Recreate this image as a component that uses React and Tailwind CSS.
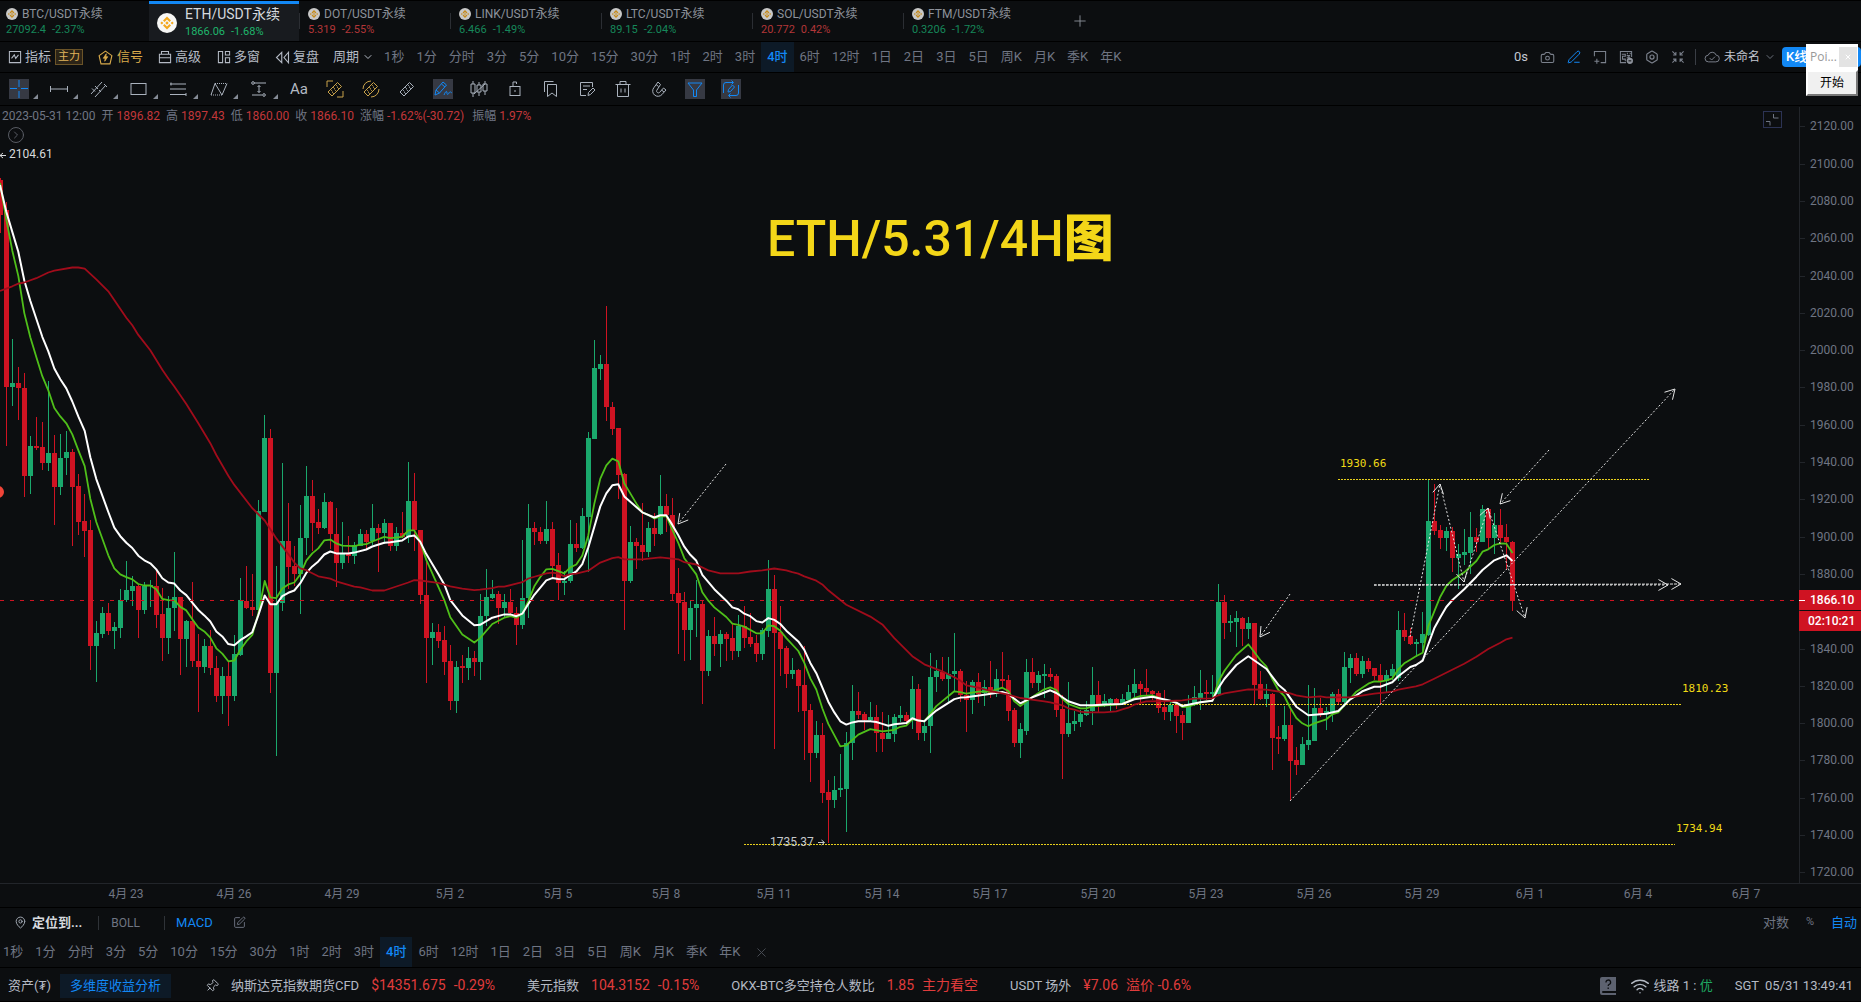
import {
  Camera,
  ChevronDown,
  CircleChevronRight,
  Hexagon,
  MapPin,
  PenLine,
  Pin,
  Plus,
  SquarePen,
  Wifi,
  X,
} from "lucide-react"

const tabs = [
  { name: "BTC/USDT永续", price: "27092.4", change: "-2.37%", up: true },
  { name: "ETH/USDT永续", price: "1866.06", change: "-1.68%", up: true, active: true },
  { name: "DOT/USDT永续", price: "5.319", change: "-2.55%" },
  { name: "LINK/USDT永续", price: "6.466", change: "-1.49%", up: true },
  { name: "LTC/USDT永续", price: "89.15", change: "-2.04%", up: true },
  { name: "SOL/USDT永续", price: "20.772", change: "0.42%" },
  { name: "FTM/USDT永续", price: "0.3206", change: "-1.72%", up: true },
]

const periods = [
  "1秒", "1分", "分时", "3分", "5分", "10分", "15分", "30分", "1时", "2时", "3时",
  "4时", "6时", "12时", "1日", "2日", "3日", "5日", "周K", "月K", "季K", "年K",
]

const dates = [
  "4月 23", "4月 26", "4月 29", "5月 2", "5月 5", "5月 8", "5月 11", "5月 14",
  "5月 17", "5月 20", "5月 23", "5月 26", "5月 29", "6月 1", "6月 4", "6月 7",
]

// one block per stretch of the chart, rows are [up, bodyTop, bodyBottom, high, low]
const candleBlocks = [
  {
    first: 0, base: 160, step: 2.6133,
    rows: [
      [0,52,143,48,190],[0,130,592,110,747],[1,583,592,467,643],[0,583,597,542,680],[0,597,825,557,881],
      [1,747,825,721,874],[0,747,752,672,759],[0,751,793,685,809],[1,766,793,578,812],[0,766,854,719,955],
      [1,779,854,716,875],[1,763,780,707,823],[0,763,854,755,1008],[0,852,945,821,980],[0,943,969,872,1038],
      [0,967,1269,942,1334],[1,1236,1269,1205,1363],[1,1184,1238,1168,1249],[0,1184,1230,1157,1241],[1,1220,1230,1208,1279],
      [1,1151,1222,1121,1250],[1,1124,1151,1049,1155],[1,1114,1126,1087,1166],[0,1114,1175,1109,1250],[1,1114,1175,1102,1186],
      [1,1110,1114,1097,1168],[0,1112,1188,1070,1222],[0,1187,1248,1119,1308],[1,1171,1248,1139,1291],[1,1142,1172,1024,1231],
      [0,1142,1253,1141,1346],[1,1205,1253,1203,1326],[0,1206,1308,1103,1324],[0,1308,1324,1240,1442],[1,1270,1324,1252,1341],
      [0,1270,1328,1227,1345],[0,1328,1402,1296,1416],[1,1348,1402,1326,1449],[0,1348,1402,1311,1480],[1,1291,1402,1242,1414],
      [1,1151,1294,1092,1296],[0,1152,1170,1062,1173],[0,1168,1175,1083,1191],[1,917,1175,889,1178],[1,727,919,667,921],
      [0,727,1340,702,1392],[1,1157,1340,1061,1557],[1,996,1157,792,1179],[0,996,1063,896,1120],[0,1061,1081,1009,1112],
      [1,989,1081,901,1186],[1,878,989,800,1032],[0,878,949,837,1022],[0,946,962,912,977],[1,894,962,869,965],
      [0,894,978,892,1017],[0,977,1052,910,1115],[1,1030,1052,946,1070],[0,1028,1034,983,1052],[1,1007,1034,997,1055],
      [1,978,1008,965,1010],[0,978,997,968,1018],[1,962,996,899,1005],[0,962,974,951,1076],[1,949,974,939,1004],
      [0,949,1008,949,1022],[1,976,1008,960,1022],[0,975,985,920,988],[1,891,985,788,1000],[0,891,968,817,1021],
      [0,968,1138,967,1159],[0,1138,1248,1050,1368],[1,1233,1248,1210,1321],[0,1233,1256,1213,1276],[0,1254,1311,1219,1345],
      [0,1310,1413,1267,1437],[1,1326,1413,1310,1445],[0,1322,1328,1293,1366],[1,1301,1328,1273,1358],[0,1301,1311,1282,1349],
    ],
  },
  {
    first: 80, base: 280, step: 2.7034,
    rows: [
      [1,907,1032,850,1081],[1,857,907,780,935],[1,850,859,811,862],[0,850,888,842,931],[1,871,888,848,910],
      [0,871,901,835,910],[0,900,934,884,987],[1,860,934,703,944],[1,671,861,606,913],[0,671,680,653,717],
      [0,680,705,669,715],[1,674,705,598,714],[0,674,772,655,805],[0,770,818,738,866],[1,814,818,786,851],
      [1,715,815,648,818],[0,715,724,656,735],[1,639,724,616,728],[1,428,640,411,789],[1,239,429,163,431],
      [1,228,240,204,270],[0,228,342,70,380],[0,342,402,331,419],[0,401,526,400,591],[0,525,815,522,945],
      [1,709,815,665,818],[0,709,718,697,781],[0,717,734,603,761],[1,671,734,653,748],[0,671,688,630,718],
      [1,612,688,527,689],[0,612,634,578,682],[0,634,848,588,866],[0,847,872,778,1011],[0,871,945,843,1030],
      [1,888,945,867,1027],[1,877,888,810,965],[0,877,1056,865,1146],[1,963,1056,945,1071],[0,963,983,910,1017],
      [1,958,983,947,1046],[0,958,970,951,1031],[0,969,1002,930,1027],[1,935,1002,906,1019],[0,935,967,880,995],
      [0,966,983,901,992],[0,982,1010,960,1034],[1,947,1010,941,1027],[1,836,948,758,966],[0,836,953,797,1269],
      [0,952,997,882,1071],[0,996,1064,989,1103],[1,1053,1064,1022,1079],[0,1053,1097,1051,1168],[0,1096,1164,989,1298],
      [0,1163,1280,1147,1356],[1,1231,1280,1193,1291],[0,1231,1386,1197,1413],[0,1385,1407,1352,1522],[1,1380,1407,1340,1427],
      [1,1374,1380,1282,1398],[1,1253,1375,1222,1492],[1,1166,1253,1096,1298],[0,1166,1175,1115,1186],[0,1174,1189,1167,1217],
      [1,1182,1190,1142,1195],[0,1182,1224,1149,1277],[0,1224,1240,1168,1277],[1,1225,1240,1175,1242],[1,1182,1226,1173,1250],
      [1,1177,1183,1152,1195],[0,1177,1192,1168,1205],[1,1107,1190,1070,1214],[0,1107,1224,1091,1243],[1,1207,1224,1190,1245],
      [1,1072,1207,1008,1279],[1,1058,1072,1027,1115],[0,1059,1080,1020,1083],[1,1064,1080,1020,1140],[1,1058,1064,955,1110],
    ],
  },
  {
    first: 160, base: 560, step: 3,
    rows: [
      [0,333,405,326,425],[0,404,419,363,516],[1,366,419,360,461],[0,366,402,338,430],[1,381,400,360,439],
      [0,381,402,303,413],[1,357,402,327,411],[0,357,363,276,382],[0,360,452,345,482],[0,450,548,444,561],
      [1,507,548,489,594],[1,336,513,297,525],[0,336,369,293,384],[1,345,369,333,393],[1,342,347,311,414],
      [0,342,351,324,363],[0,348,450,341,470],[0,447,522,405,657],[1,489,522,366,530],[1,483,492,453,513],
      [1,462,486,450,500],[1,450,465,423,467],[1,405,453,320,496],[0,405,432,363,455],[1,423,432,402,441],
      [1,417,430,414,452],[0,417,432,413,447],[1,417,432,402,436],[1,396,420,375,422],[1,372,399,326,415],
      [0,372,387,363,430],[0,384,396,326,404],[0,394,402,390,420],[0,399,444,394,460],[0,441,456,390,480],
      [1,435,456,425,482],[0,435,468,425,519],[0,465,489,453,540],[1,435,489,405,489],[1,411,435,377,437],
      [1,399,414,330,450],[0,396,402,360,420],[1,396,402,345,420],[1,126,402,72,405],[0,126,189,105,237],
      [1,183,189,165,216],[1,174,186,153,262],[0,174,207,170,258],[1,189,207,171,237],[0,189,375,189,435],
      [0,372,417,333,420],[1,402,417,372,441],[0,402,534,400,629],[0,531,537,499,582],[1,495,537,437,543],
      [0,495,603,440,723],[0,600,615,561,644],[1,552,615,530,615],[1,540,555,375,569],[1,444,543,384,543],
      [0,444,462,413,470],[1,453,462,441,511],[1,402,456,396,485],[0,402,426,387,435],[1,321,426,276,440],
      [1,294,324,282,370],[0,294,342,278,348],[1,303,342,288,354],[0,303,327,293,336],[0,324,347,323,360],
      [0,345,366,311,431],[1,345,363,329,400],[1,327,348,311,360],[1,210,354,153,363],[0,210,231,159,243],
      [0,228,252,204,255],[1,246,252,238,290],
    ],
  },
  {
    first: 237, base: 370, step: 3,
    rows: [
      [1,792,819,727,849],[1,453,795,330,798],[0,453,483,341,496],[0,480,504,465,537],[1,483,504,470,543],
      [0,483,563,471,606],[1,552,563,522,657],[1,546,555,477,585],[1,501,548,426,611],[0,501,516,474,546],
      [1,417,516,404,516],[0,417,504,413,537],[1,465,504,429,553],[0,465,503,416,522],[0,501,517,462,600],
      [0,516,692,513,723],
    ],
  },
]

const averageBlocks = [
  {
    x: 0, y: 160, sx: 3, sy: 2.6133,
    white: "0,65 19,135 37,188 55,240 73,315 91,368 109,415 127,462 145,500 163,545 181,573 199,597 217,631 235,670 254,708 271,777 289,834 325,920 343,961 361,983 379,1000 397,1014 415,1034 433,1046 451,1054 469,1070 487,1093 505,1104 523,1107 541,1125 559,1137 577,1157 595,1176 613,1190 631,1206 649,1232 667,1245 685,1265 703,1268 721,1255 739,1245 757,1234 775,1190 794,1138 811,1161 829,1161 847,1140 865,1131 883,1125 901,1106 919,1079 937,1062 955,1049 973,1031 991,1023 1009,1028 1045,1028 1063,1026 1099,1018 1117,1010 1153,1000 1171,999 1207,994 1225,984 1243,981 1261,998 1279,1030 1315,1082 1333,1109 1351,1150 1387,1190 1423,1216",
    green: "0,60 19,155 37,237 55,303 73,400 91,463 109,515 127,565 145,602 163,648 181,670 199,688 217,717 235,758 254,800 271,885 289,946 325,1033 343,1067 361,1083 379,1090 397,1096 415,1108 433,1112 451,1112 469,1122 487,1147 505,1150 523,1151 541,1168 559,1177 577,1200 595,1222 613,1232 631,1248 649,1276 667,1290 685,1310 703,1308 721,1280 739,1258 757,1241 775,1185 794,1100 811,1143 829,1145 847,1120 865,1109 883,1104 901,1083 919,1047 937,1028 955,1015 973,994 991,992 1009,1002 1027,1008 1063,1009 1081,1005 1099,1004 1117,997 1153,985 1171,988 1207,985 1225,968 1243,968 1261,998 1279,1045 1297,1080 1333,1150 1351,1195 1387,1240 1423,1261",
    red: "0,342 37,330 55,323 73,320 109,309 145,294 163,289 217,281 235,281 254,284 289,312 325,343 379,412 397,432 415,457 451,497 487,548 505,571 523,592 559,638 595,688 631,740 649,771 685,825 703,849 757,910 794,942 829,989 865,1030 883,1052 901,1067 919,1072 955,1088 991,1094 1009,1101 1063,1115 1081,1117 1117,1125 1153,1125 1225,1104 1243,1098 1261,1099 1315,1105 1351,1114 1387,1120 1423,1124",
  },
  {
    x: 480, y: 280, sx: 3, sy: 2.7034,
    white: "0,932 37,913 73,904 91,904 109,909 127,902 145,876 163,851 199,812 217,806 235,808 253,809 271,797 289,788 307,768 325,723 361,612 379,577 397,555 415,552 433,585 487,628 523,642 541,636 559,636 577,662 595,690 613,721 631,743 649,759 667,797 703,836 739,867 757,885 775,890 793,902 811,909 829,922 847,926 865,914 883,919 901,930 919,948 955,977 973,1000 991,1035 1009,1063 1045,1140 1063,1169 1081,1193 1099,1202 1117,1196 1135,1193 1171,1193 1189,1195 1207,1200 1225,1205 1243,1201 1279,1198 1297,1185 1315,1191 1333,1193 1351,1178 1369,1164 1423,1133 1441,1129",
    green: "0,968 37,930 73,913 91,909 109,913 127,902 145,868 163,828 181,803 199,782 217,781 235,787 253,793 271,777 289,769 307,745 325,690 343,605 361,537 379,501 397,483 415,490 433,550 469,604 487,628 505,635 523,645 541,639 559,638 577,675 595,711 613,752 649,796 667,844 685,867 703,885 739,911 757,929 775,932 793,937 829,955 847,955 865,934 883,936 901,948 919,968 955,1003 973,1035 991,1077 1009,1107 1027,1158 1045,1200 1081,1261 1099,1258 1135,1229 1171,1214 1207,1220 1243,1216 1261,1208 1279,1205 1297,1188 1333,1193 1351,1173 1369,1152 1423,1112 1441,1114",
    red: "0,837 37,833 55,829 73,829 109,821 127,817 145,807 199,793 217,791 235,794 253,801 271,795 289,794 325,786 361,764 397,752 415,749 433,755 487,755 541,750 595,755 613,763 649,769 685,785 721,793 775,793 811,788 847,785 883,780 919,785 937,790 955,794 973,801 1009,813 1027,823 1045,839 1099,878 1171,910 1207,931 1243,968 1297,1017 1333,1039 1387,1058 1423,1074 1441,1083",
  },
  {
    x: 940, y: 560, sx: 3, sy: 3,
    white: "79,412 133,404 187,396 205,402 241,430 277,412 331,391 349,399 385,424 421,436 457,436 511,433 547,432 583,418 637,410 691,422 709,428 727,438 781,427 817,422 835,385 853,357 889,315 925,289 979,326 1015,374 1033,389 1069,440 1105,466 1159,461 1195,453 1231,418 1267,394 1303,380 1321,380 1357,367 1375,349 1411,321",
    green: "79,401 115,395 151,395 187,383 205,393 223,424 241,438 277,411 313,388 331,382 349,390 367,416 385,432 421,445 439,445 457,439 529,434 547,432 583,414 601,408 637,406 673,420 709,428 727,441 745,440 781,427 817,422 835,365 853,333 889,285 925,253 961,300 979,319 997,357 1015,390 1033,408 1051,444 1069,474 1087,490 1105,499 1123,490 1159,478 1177,463 1195,457 1213,436 1249,395 1285,371 1303,364 1321,365 1339,361 1357,355 1375,328 1393,310 1411,299",
    red: "79,376 115,383 151,393 187,400 205,404 241,414 313,424 331,427 367,436 385,445 403,449 421,455 439,457 493,457 529,454 547,448 565,443 583,434 619,424 691,423 727,421 763,416 817,415 835,406 853,400 925,388 979,389 1033,397 1051,400 1069,406 1105,412 1141,409 1159,412 1231,412 1303,401 1339,397 1357,395 1375,389 1411,382",
  },
  {
    x: 1300, y: 370, sx: 2.795, sy: 3,
    white: "324,885 343,872 358,825 375,775 392,742 409,711 426,690 459,658 493,620 510,600 543,571 577,556 594,573",
    green: "324,859 343,848 358,770 375,725 392,680 409,648 426,630 459,607 493,573 510,545 526,538 543,525 560,520 577,521 594,549",
    red: "324,949 343,943 375,926 459,881 493,860 526,837 560,818 577,808 594,803",
  },
]

function averagePoints(name) {
  return averageBlocks
    .flatMap((b) =>
      b[name].split(" ").map((pair) => {
        const [x, y] = pair.split(",").map(Number)
        return `${(b.x + x / b.sx).toFixed(1)},${(b.y + y / b.sy).toFixed(1)}`
      })
    )
    .join(" ")
}

const candles = candleBlocks.flatMap((b) =>
  b.rows.map(([up, top, bottom, high, low], i) => ({
    x: (b.first + i) * 6,
    up,
    top: Math.round(b.base + top / b.step),
    bottom: Math.round(b.base + bottom / b.step),
    high: Math.round(b.base + high / b.step),
    low: Math.round(b.base + low / b.step),
  }))
)

const arrows = [
  [726, 464, 678, 524],
  [1290, 594, 1260, 637],
  [1549, 450, 1500, 504],
  [1290, 801, 1675, 389],
  [1410, 637, 1440, 484],
  [1440, 484, 1464, 582],
  [1464, 582, 1488, 508],
  [1488, 508, 1525, 618],
]

const levels = [
  { price: "1930.66", y: 479, from: 1338, to: 1649, x: 1340, textY: 467 },
  { price: "1810.23", y: 704, from: 1100, to: 1681, x: 1682, textY: 692 },
  { price: "1734.94", y: 844, from: 744, to: 1675, x: 1676, textY: 832 },
]

const sans = "font-['Roboto','Noto_Sans_CJK_SC',sans-serif]"

function Arrow({ x1, y1, x2, y2, dash = "2 2" }) {
  const a = Math.atan2(y2 - y1, x2 - x1)
  const wing = (d) => `${x2 - 11 * Math.cos(a + d)},${y2 - 11 * Math.sin(a + d)}`
  return (
    <g stroke="#e4e4e4" fill="none">
      <line x1={x1} y1={y1} x2={x2} y2={y2} strokeDasharray={dash} />
      <polyline points={`${wing(0.52)} ${x2},${y2} ${wing(-0.52)}`} />
    </g>
  )
}

function Chart() {
  const prices = []
  for (let p = 2120; p >= 1720; p -= 20) if (p !== 1860) prices.push(p)

  return (
    <svg
      viewBox="0 106 1861 801"
      preserveAspectRatio="xMinYMin meet"
      className={`block h-full w-full text-[12px] ${sans}`}
    >
      <g shapeRendering="crispEdges">
        {candles.map((c) => (
          <g key={c.x} fill={c.up ? "#1aa86c" : "#cf1322"}>
            <rect x={c.x} y={c.high} width="1" height={c.low - c.high} />
            <rect x={c.x - 2} y={c.top} width="5" height={Math.max(1, c.bottom - c.top)} />
          </g>
        ))}
      </g>

      {levels.map((l) => (
        <g key={l.price}>
          <line x1={l.from} x2={l.to} y1={l.y + 0.5} y2={l.y + 0.5} stroke="#e8cf1c" strokeDasharray="2 1" />
          <text x={l.x} y={l.textY} fill="#f0d916" className="font-['DejaVu_Sans_Mono',monospace] text-[11px]">
            {l.price}
          </text>
        </g>
      ))}

      <g fill="none" strokeLinejoin="round">
        <polyline points={averagePoints("green")} stroke="#4fbf1a" strokeWidth="1.8" />
        <polyline points={averagePoints("white")} stroke="#ffffff" strokeWidth="2" />
        <polyline points={averagePoints("red")} stroke="#a00c1b" strokeWidth="1.8" />
      </g>
      <circle cx="-2" cy="492" r="6" fill="#f04438" />

      <line x1="0" x2="1799" y1="600.5" y2="600.5" stroke="#cf1322" strokeDasharray="4 6" />
      {arrows.map(([x1, y1, x2, y2]) => (
        <Arrow key={`${x1}-${x2}`} x1={x1} y1={y1} x2={x2} y2={y2} />
      ))}
      <Arrow x1={1374} y1={585} x2={1668} y2={585} />
      <Arrow x1={1374} y1={585} x2={1681} y2={584} dash="3 1" />

      <text x="9" y="158" fill="#d8dadd">2104.61</text>
      <path d="M6 155.500H0M3 153l-3 2.500 3 2.500" stroke="#d8dadd" fill="none" />
      <text x="770" y="846" fill="#c5c8cc">1735.37</text>
      <path d="M818 842.500h6M821.500 840l3 2.500-3 2.500" stroke="#c5c8cc" fill="none" />
      <text x="767" y="256" fill="#f3d618" className="text-[50px] font-medium">
        ETH/5.31/4H<tspan className="font-black">图</tspan>
      </text>

      <g shapeRendering="crispEdges" stroke="#22252a">
        <line x1="1799.5" x2="1799.5" y1="107" y2="883" />
        <line x1="0" x2="1861" y1="883.5" y2="883.5" />
      </g>
      {prices.map((p) => {
        const y = Math.round(126.3 + (2120 - p) * 1.865)
        return (
          <g key={p}>
            <line x1="1800" x2="1805" y1={y + 0.5} y2={y + 0.5} stroke="#22252a" />
            <text x="1810" y={y + 4} fill="#6f7583">{p}.00</text>
          </g>
        )
      })}
      <g className="font-medium">
        <rect x="1799" y="590" width="62" height="20" fill="#cf1322" />
        <rect x="1799" y="611" width="62" height="20" fill="#cf1322" />
        <line x1="1799" x2="1805" y1="600.5" y2="600.5" stroke="#fff" />
        <text x="1810" y="604" fill="#fff">1866.10</text>
        <text x="1808" y="625" fill="#fff">02:10:21</text>
      </g>
      {dates.map((d, i) => (
        <text key={d} x={126 + i * 108} y="898" textAnchor="middle" fill="#6f7583">{d}</text>
      ))}

      <g fill="none">
        <rect x="1763.5" y="111.500" width="18" height="16" stroke="#2c3354" />
        <path d="M1773.500 114v4h5M1766 121.500h4v4" stroke="#6f7583" />
      </g>
    </svg>
  )
}

function Coin({ large }) {
  return (
    <svg viewBox="0 0 20 20" className={large ? "size-5 shrink-0" : "size-3 shrink-0 opacity-80"}>
      <circle cx="10" cy="10" r="10" fill="#f7f7f5" />
      <g fill="#f3a81c">
        <path d="M10 3.500l4 4-1.500 1.500L10 6.500 7.500 9 6 7.500z" />
        <path d="M10 16.500l4-4-1.500-1.500-2.500 2.500L7.500 11 6 12.500z" />
        <path d="M10 8.300l1.700 1.700-1.700 1.700L8.300 10z" />
        <path d="M4.800 8.500l1.500 1.500-1.500 1.500L3.300 10zM15.200 8.500l1.500 1.500-1.500 1.500-1.500-1.500z" />
      </g>
    </svg>
  )
}

function Tab({ tab, first, divider }) {
  const tone = tab.up
    ? tab.active ? "text-[#1fb56c]" : "text-[#16875a]"
    : "text-[#b23638]"
  if (tab.active) {
    return (
      <button className="flex h-full w-[150px] items-center gap-2 border-t-3 border-[#1288f5] bg-[#181b1f] pl-2 text-left">
        <Coin large />
        <span>
          <span className="block text-[14px] leading-[18px] text-[#d5d9de]">{tab.name}</span>
          <span className={`flex gap-1.5 text-[11px] leading-[18px] ${tone}`}>
            <span>{tab.price}</span>
            <span>{tab.change}</span>
          </span>
        </span>
      </button>
    )
  }
  return (
    <button className={`relative h-full pt-px text-left ${first ? "w-[149px] pl-1.5" : "w-[151px] pl-[9px]"}`}>
      {divider && <span className="absolute top-3 left-0 h-4 w-px bg-[#2b2e33]" />}
      <span className="flex items-center gap-1 text-[12px] leading-4 text-[#8d929b]">
        <Coin />
        {tab.name}
      </span>
      <span className={`flex gap-1.5 text-[11px] leading-4 ${tone}`}>
        <span>{tab.price}</span>
        <span>{tab.change}</span>
      </span>
    </button>
  )
}

function Periods() {
  return (
    <div className="flex h-[30px] text-[13px]">
      {periods.map((p) => (
        <button
          key={p}
          className={`px-1.5 ${p === "4时" ? "bg-[#0d1a27] font-medium text-[#1288f5]" : "text-[#6f7583]"}`}
        >
          {p}
        </button>
      ))}
    </div>
  )
}

function Glyph({ children, className = "size-5" }) {
  return (
    <svg viewBox="0 0 20 20" fill="none" stroke="currentColor" className={`shrink-0 ${className}`}>
      {children}
    </svg>
  )
}

const ruler = (
  <>
    <path d="M3 13L12.500 3.500l4 4L7 17z" />
    <path d="M5.500 10.500l2 2M8 8l2 2M10.500 5.500l2 2M9 15l-2-2M11.500 12.500l-2-2M14 10l-2-2" strokeWidth=".8" />
  </>
)

const shapeTools = [
  { label: "十字光标", active: true, art: <path d="M10 1v7M10 12v7M1 9.500h7M12 9.500h7" /> },
  { label: "线段", art: <path d="M1 10h18M1.500 7v6M18.500 7v6" /> },
  { label: "平行线", art: <path d="M2 15L13 3M6 18L17 6M3 9.500l3 3M9 10l-3-3M12 13l-2-2M15 5l3 3" /> },
  { label: "矩形", art: <rect x="2" y="4.500" width="15" height="11" /> },
  { label: "斐波那契", art: <path d="M1 5h16M1 10h16M1 15.500h16M2 3.500v3M17 14v3" /> },
  { label: "形态", art: <><path d="M2 16L6 4.500l7 11.500L18 4.500" /><path d="M2 16h11M6 4.500h12" strokeDasharray="1 1" /></> },
  { label: "测量", art: <><path d="M5 4h12M3 16h10M10 6.500v7M8.500 8L10 6.500 11.500 8M8.500 12l1.500 1.500 1.500-1.500" /><circle cx="4" cy="4" r="1.300" /><circle cx="15" cy="16" r="1.300" /></> },
]

const editTools = [
  { label: "区间尺", gold: true, art: <>{ruler}<path d="M2 8V2h6M18 12v6h-6" /></> },
  { label: "圈选尺", gold: true, art: <>{ruler}<path d="M2 10A8 8 0 0 1 10 2M18 10A8 8 0 0 1 10 18" /></> },
  { label: "尺子", art: ruler },
  { label: "画笔", active: true, art: <path d="M2 16l1-5 7-8 3.500 3-7 8-4.500 2M3 11l3.500 3M8.500 5l3.500 3M11 16c2-5 3-4 3-2s1 2 2 0 1.500-1 3 0" /> },
  { label: "K线样式", art: <><path d="M4 2v3M4 14v4M10 3v3M10 13v4M16 2v3M16 12v4" /><path d="M2 5h4v9H2zM8 6h4v7H8zM14 5h4v7h-4z" /><path d="M5 15L16 5" /></> },
  { label: "锁定", art: <><rect x="5" y="7.500" width="10" height="9" /><path d="M8 7.500V3h3.500v2M10 11v2" /></> },
  { label: "收藏", art: <path d="M6.500 5.500h9v12L11 14l-4.500 3.500zM3.500 13V2.500h9" /> },
  { label: "备注", art: <path d="M9 16.500H3.500v-13h12V8M6 7h7M6 10.500h4M11 16.500l.5-3 4.500-4.500 2 2-4.500 4.500z" /> },
  { label: "删除", art: <path d="M2.500 5.500h15M7 5V2.500h6V5M4.500 6v11.500h11V6M8 9.500v4M12 9.500v4" /> },
  { label: "磁铁", art: <path d="M9 3L5 8.500a5 5 0 0 0 8 7L17 11l-2.500-2-4 4.500a1.800 1.800 0 0 1-2.800-2L11.500 5.500zM7 5.500l2.500 2M12.500 11l2.500 2" /> },
  { label: "筛选", active: true, art: <path d="M3 4h14l-5.500 7v6.500h-3V11L3 4" /> },
  { label: "循环画图", active: true, art: <path d="M2.500 14V6q0-2.500 2.500-2.500h7M10.500 1.500l2 2-2 2M17.500 6v8q0 2.500-2.500 2.500H8M9.500 14.500l-2 2 2 2M7 13l.5-2.500 4-4.500 2 2-4 4.500z" /> },
]

function ToolButton({ tool }) {
  const tone = tool.gold ? "text-[#c9a24a]" : tool.active ? "bg-[#363943] text-[#1288f5]" : "text-[#aab2bd]"
  return (
    <button aria-label={tool.label} className={`size-5 ${tone}`}>
      <Glyph>{tool.art}</Glyph>
    </button>
  )
}

function Quote({ label, value, note }) {
  return (
    <div className="flex items-center text-[13px] text-[#b4bac4]">
      {label}
      <span className="ml-3 flex gap-2 text-[14px] text-[#e03c3c]">
        <span>{value}</span>
        <span>{note}</span>
      </span>
    </div>
  )
}

export default function App() {
  return (
    <div className={`flex h-screen flex-col overflow-hidden bg-[#0c0e10] whitespace-nowrap ${sans}`}>
      <header className="flex h-[42px] shrink-0 items-center border-t border-b border-black">
        {tabs.map((t, i) => (
          <Tab key={t.name} tab={t} first={i === 0} divider={i > 1} />
        ))}
        <button aria-label="添加" className="ml-[17px] text-[#8d929b]">
          <Plus size={18} strokeWidth={1.2} />
        </button>
      </header>

      <nav className="flex h-[31px] shrink-0 items-center border-b border-black text-[13px] text-[#b4bac4]">
        <button className="ml-2 flex items-center gap-[3px]">
          <Glyph className="size-3.5"><path strokeWidth="1.500" d="M2 2h16v16H2zM5 12l4-5 2 5 4-5" /></Glyph>
          指标
        </button>
        <button className="ml-1 h-4 w-7 border border-[#6b5428] bg-[#2c2417] text-[11px] leading-3 text-[#e0b45c]">主力</button>
        <button className="ml-[15px] flex items-center gap-1 text-[#d9ab4b]">
          <Glyph className="size-[15px]">
            <path strokeWidth="1.500" d="M10 1.500l8.500 6L16 18.500H4L1.500 7.500z" />
            <path fill="currentColor" d="M11 5l-4 6h2.500L9 15l4-6h-2.500z" />
          </Glyph>
          信号
        </button>
        <button className="ml-[15px] flex items-center gap-[3px]">
          <Glyph className="size-3.5"><path strokeWidth="1.500" d="M2 6h16v12H2zM5 6V2h10v4M2 11h16" /></Glyph>
          高级
        </button>
        <button className="ml-4 flex items-center gap-[3px]">
          <Glyph className="size-3.5"><path strokeWidth="1.500" d="M2 2h6v16H2zM12 2h6v5h-6zM12 11h6v7h-6z" /></Glyph>
          多窗
        </button>
        <button className="ml-[15px] flex items-center gap-[3px]">
          <Glyph className="size-[15px]"><path strokeWidth="1.500" d="M9 3v14L2 10zM18 3l-6 7 6 7z" /></Glyph>
          复盘
        </button>
        <button className="mr-1 ml-3.5 flex items-center gap-[3px]">
          周期
          <ChevronDown size={12} strokeWidth={2} />
        </button>
        <Periods />

        <div className="ml-auto flex items-center text-[#7b818c]">
          <span className="mr-3 text-[#c3c8d0]">0s</span>
          <div className="flex items-center gap-3">
            <button aria-label="截图"><Camera size={15} strokeWidth={1.7} /></button>
            <button aria-label="画线" className="text-[#1288f5]"><PenLine size={14} strokeWidth={1.7} /></button>
            <button aria-label="添加窗口">
              <Glyph className="size-3.5"><path strokeWidth="1.500" d="M2 9V2h16v16h-7M2 16h7M5.500 12.500v7" /></Glyph>
            </button>
            <button aria-label="弹幕">
              <Glyph className="size-3.5">
                <path strokeWidth="1.500" d="M10 18H2V2h16v8M4 6h5v3H5v4h4v3M12 4v2M16 4v2M11 8h5M11 11h5M14 7v7" />
                <circle cx="15.500" cy="15.500" r="4.500" fill="#8d929b" stroke="none" />
                <path d="M13.500 15.500h4" stroke="#0c0e10" strokeWidth="1.500" />
              </Glyph>
            </button>
            <button aria-label="设置">
              <svg viewBox="0 0 24 24" fill="none" stroke="currentColor" strokeWidth="2" className="size-3.5">
                <Hexagon size={24} strokeWidth={2} />
                <circle cx="12" cy="12" r="3.500" />
              </svg>
            </button>
            <button aria-label="退出全屏">
              <Glyph className="size-3.5"><path strokeWidth="1.500" d="M2 2l5 5M3 7h4V3M18 2l-5 5M17 7h-4V3M2 18l5-5M3 13h4v4M18 18l-5-5M17 13h-4v4" /></Glyph>
            </button>
          </div>
          <span className="mr-2 ml-2.5 h-4 w-px bg-[#3a3e45]" />
          <button className="flex items-center gap-1 text-[12px] text-[#c3c8d0]">
            <svg viewBox="0 0 20 16" fill="none" stroke="#7b818c" strokeWidth="1.300" className="h-3 w-4">
              <path d="M5.500 14.500a4.500 4.500 0 0 1-.5-9 5.500 5.500 0 0 1 10.500 0 4.500 4.500 0 0 1-.5 9zM7 9.500l2.500 2.500 4.500-4.500" />
            </svg>
            未命名
            <ChevronDown size={12} strokeWidth={1.700} className="text-[#7b818c]" />
          </button>
          <button className="ml-1.5 h-5 w-[79px] rounded-sm bg-[#1288f5] pl-1 text-left font-medium text-white">K线</button>
        </div>
      </nav>

      <div className="flex h-[33px] shrink-0 items-center gap-5 border-b border-black pl-[9px]">
        {shapeTools.map((t) => (
          <div key={t.label} className="relative flex">
            <ToolButton tool={t} />
            <svg viewBox="0 0 5 5" className="absolute top-[15px] left-6 size-[5px]">
              <path d="M5 0v5H0z" fill="#858b96" />
            </svg>
          </div>
        ))}
        <div className="flex items-center gap-4">
          <button className="w-5 text-[15px] leading-5 text-[#b4bac4]">Aa</button>
          {editTools.map((t) => (
            <ToolButton key={t.label} tool={t} />
          ))}
        </div>
      </div>

      <main className="relative min-h-0 flex-1 border-b border-black">
        <Chart />
        <div className="absolute top-px left-0 pl-0.5 text-[12px] leading-[18px]">
          <div className="flex gap-1.5 text-[#6f7583]">
            <span>2023-05-31 12:00</span>
            <span>开 <b className="font-normal text-[#c2373a]">1896.82</b></span>
            <span>高 <b className="font-normal text-[#c2373a]">1897.43</b></span>
            <span>低 <b className="font-normal text-[#c2373a]">1860.00</b></span>
            <span>收 <b className="font-normal text-[#c2373a]">1866.10</b></span>
            <span>涨幅 <b className="font-normal text-[#c2373a]">-1.62%(-30.72)</b></span>
            <span className="pl-0.5">振幅 <b className="font-normal text-[#c2373a]">1.97%</b></span>
          </div>
          <button aria-label="展开" className="mt-px ml-[5px] block text-[#5a5e66]">
            <CircleChevronRight size={18} strokeWidth={1.300} />
          </button>
        </div>
      </main>

      <div className="flex h-[29px] shrink-0 items-center text-[12px] text-[#6f7583]">
        <button className="ml-3.5 flex items-center gap-[5px] text-[13px] font-bold text-[#d5d9de]">
          <MapPin size={13} strokeWidth={1.700} className="text-[#aab2bd]" />
          定位到...
        </button>
        <span className="mx-3 ml-4 h-3.5 w-px bg-[#2f3338]" />
        <button>BOLL</button>
        <span className="mr-[11px] ml-6 h-3.5 w-px bg-[#2f3338]" />
        <button className="text-[13px] text-[#1288f5]">MACD</button>
        <button aria-label="编辑指标" className="ml-5"><SquarePen size={13} strokeWidth={1.700} /></button>
        <div className="mr-1 ml-auto flex items-center gap-[17px] text-[13px]">
          <button>对数</button>
          <button className="text-[11px]">%</button>
          <button className="text-[#1288f5]">自动</button>
        </div>
      </div>

      <div className="-ml-[3px] flex h-[30px] shrink-0 items-center">
        <Periods />
        <button aria-label="关闭" className="ml-2 text-[#4a4e55]"><X size={15} strokeWidth={1.500} /></button>
      </div>

      <footer className="flex h-[35px] shrink-0 items-center border-t border-b border-black pt-0.5 text-[13px] text-[#b4bac4]">
        <button className="ml-2">资产(₮)</button>
        <button className="ml-[9px] h-6 bg-[#0d1a27] px-2.5 text-[#1288f5]">多维度收益分析</button>
        <Pin size={14} strokeWidth={1.600} className="mr-3 ml-[34px] rotate-45" />
        <div className="flex gap-8">
          <Quote label="纳斯达克指数期货CFD" value="$14351.675" note="-0.29%" />
          <Quote label="美元指数" value="104.3152" note="-0.15%" />
          <Quote label="OKX-BTC多空持仓人数比" value="1.85" note="主力看空" />
          <Quote label="USDT 场外" value="¥7.06" note="溢价 -0.6%" />
        </div>
        <div className="mr-2 ml-auto flex items-center">
          <svg viewBox="0 0 16 18" className="mr-3.5 h-[18px] w-4">
            <path d="M2 0h14v14H3a1 1 0 0 0 0 2h13v2H2a2 2 0 0 1-2-2V2a2 2 0 0 1 2-2z" fill="#5d6270" />
            <path d="M6 5.500a2.300 2.300 0 1 1 3 2q-.8.400-.8 1.500M8.200 10.500v1.500" stroke="#0c0e10" strokeWidth="1.300" fill="none" />
          </svg>
          <Wifi size={20} strokeWidth={1.700} className="mr-1" />
          <span>线路 1 : <span className="text-[#1fa862]">优</span></span>
          <span className="ml-[22px]">SGT</span>
          <span className="ml-1.5">05/31 13:49:41</span>
        </div>
      </footer>

      <div className="absolute top-11 right-[3px] w-[52px] bg-white">
        <div className="flex h-[26px] items-center justify-between pr-px pl-1 font-['Open_Sans',sans-serif] text-[12px] text-[#999]">
          Poi...
          <button aria-label="关闭窗口" className="flex h-5 w-[18px] items-center justify-center bg-[#e3e3e3] text-white">
            <X size={8} strokeWidth={3} />
          </button>
        </div>
        <button className="block h-[26px] w-full border-2 border-t-white border-r-[#777] border-b-[#777] border-l-white bg-[#f0f0f0] text-[12px] leading-none text-black">
          开始
        </button>
      </div>
    </div>
  )
}
